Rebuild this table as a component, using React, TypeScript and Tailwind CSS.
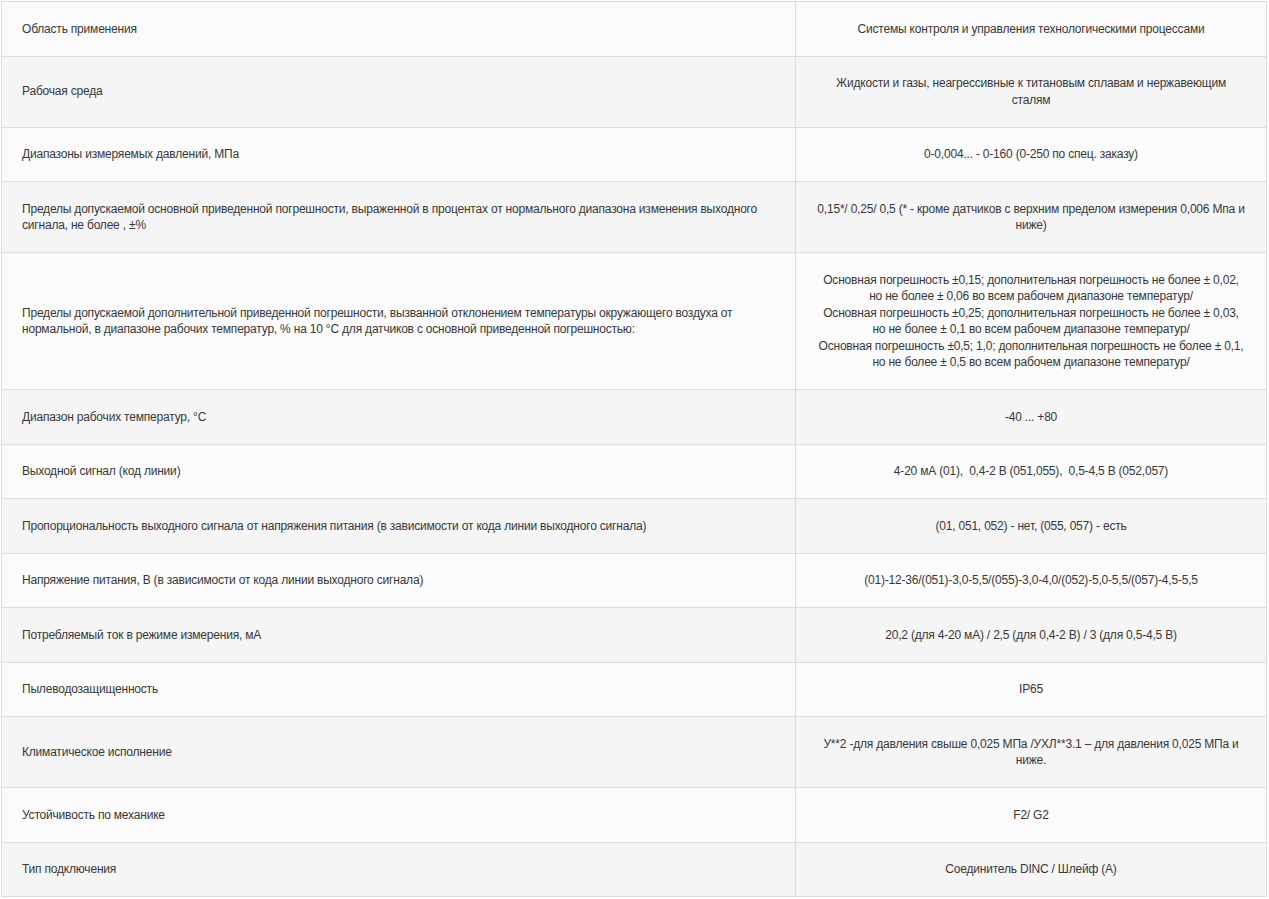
import React from 'react'

type Spec = {
  label: string
  value: React.ReactNode
}

const specs: Spec[] = [
  { label: 'Область применения', value: 'Системы контроля и управления технологическими процессами' },
  { label: 'Рабочая среда', value: 'Жидкости и газы, неагрессивные к титановым сплавам и нержавеющим сталям' },
  { label: 'Диапазоны измеряемых давлений, МПа', value: '0-0,004... - 0-160 (0-250 по спец. заказу)' },
  {
    label:
      'Пределы допускаемой основной приведенной погрешности, выраженной в процентах от нормального диапазона изменения выходного сигнала, не более , ±%',
    value: '0,15*/ 0,25/ 0,5 (* - кроме датчиков с верхним пределом измерения 0,006 Мпа и ниже)',
  },
  {
    label:
      'Пределы допускаемой дополнительной приведенной погрешности, вызванной отклонением температуры окружающего воздуха от нормальной, в диапазоне рабочих температур, % на 10 °С для датчиков с основной приведенной погрешностью:',
    value: (
      <>
        Основная погрешность ±0,15; дополнительная погрешность не более ± 0,02,
        <br />
        но не более ± 0,06 во всем рабочем диапазоне температур/
        <br />
        Основная погрешность ±0,25; дополнительная погрешность не более ± 0,03,
        <br />
        но не более ± 0,1 во всем рабочем диапазоне температур/
        <br />
        Основная погрешность ±0,5; 1,0; дополнительная погрешность не более ± 0,1,
        <br />
        но не более ± 0,5 во всем рабочем диапазоне температур/
      </>
    ),
  },
  { label: 'Диапазон рабочих температур, °С', value: '-40 ... +80' },
  { label: 'Выходной сигнал (код линии)', value: '4-20 мА (01),\u00a0 0,4-2 В (051,055),\u00a0 0,5-4,5 В (052,057)' },
  {
    label: 'Пропорциональность выходного сигнала от напряжения питания (в зависимости от кода линии выходного сигнала)',
    value: '(01, 051, 052) - нет, (055, 057) - есть',
  },
  {
    label: 'Напряжение питания, В (в зависимости от кода линии выходного сигнала)',
    value: '(01)-12-36/(051)-3,0-5,5/(055)-3,0-4,0/(052)-5,0-5,5/(057)-4,5-5,5',
  },
  { label: 'Потребляемый ток в режиме измерения, мА', value: '20,2 (для 4-20 мА) / 2,5 (для 0,4-2 В) / 3 (для 0,5-4,5 В)' },
  { label: 'Пылеводозащищенность', value: 'IP65' },
  {
    label: 'Климатическое исполнение',
    value: 'У**2 -для давления свыше 0,025 МПа /УХЛ**3.1 – для давления 0,025 МПа и ниже.',
  },
  { label: 'Устойчивость по механике', value: 'F2/ G2' },
  { label: 'Тип подключения', value: 'Соединитель DINC / Шлейф (А)' },
]

export default function App() {
  return (
    <div className="min-h-[899px] bg-white pt-px pl-px">
      <table
        className="w-[1266px] table-fixed border-collapse border border-[#dcdcdc] text-[12px] leading-[16.5px] tracking-[-0.2px] text-[#383838]"
        style={{ fontFamily: '"Liberation Sans", Arial, sans-serif' }}
      >
        <colgroup>
          <col className="w-[794px]" />
          <col />
        </colgroup>
        <tbody>
          {specs.map((row, i) => (
            <tr key={i} className={i % 2 === 0 ? 'bg-[#fbfbfb]' : 'bg-[#f5f5f5]'}>
              <td className="border border-[#dcdcdc] px-5 py-[18.5px] align-middle">{row.label}</td>
              <td className="border border-[#dcdcdc] px-5 py-[18.5px] text-center align-middle">{row.value}</td>
            </tr>
          ))}
        </tbody>
      </table>
    </div>
  )
}
